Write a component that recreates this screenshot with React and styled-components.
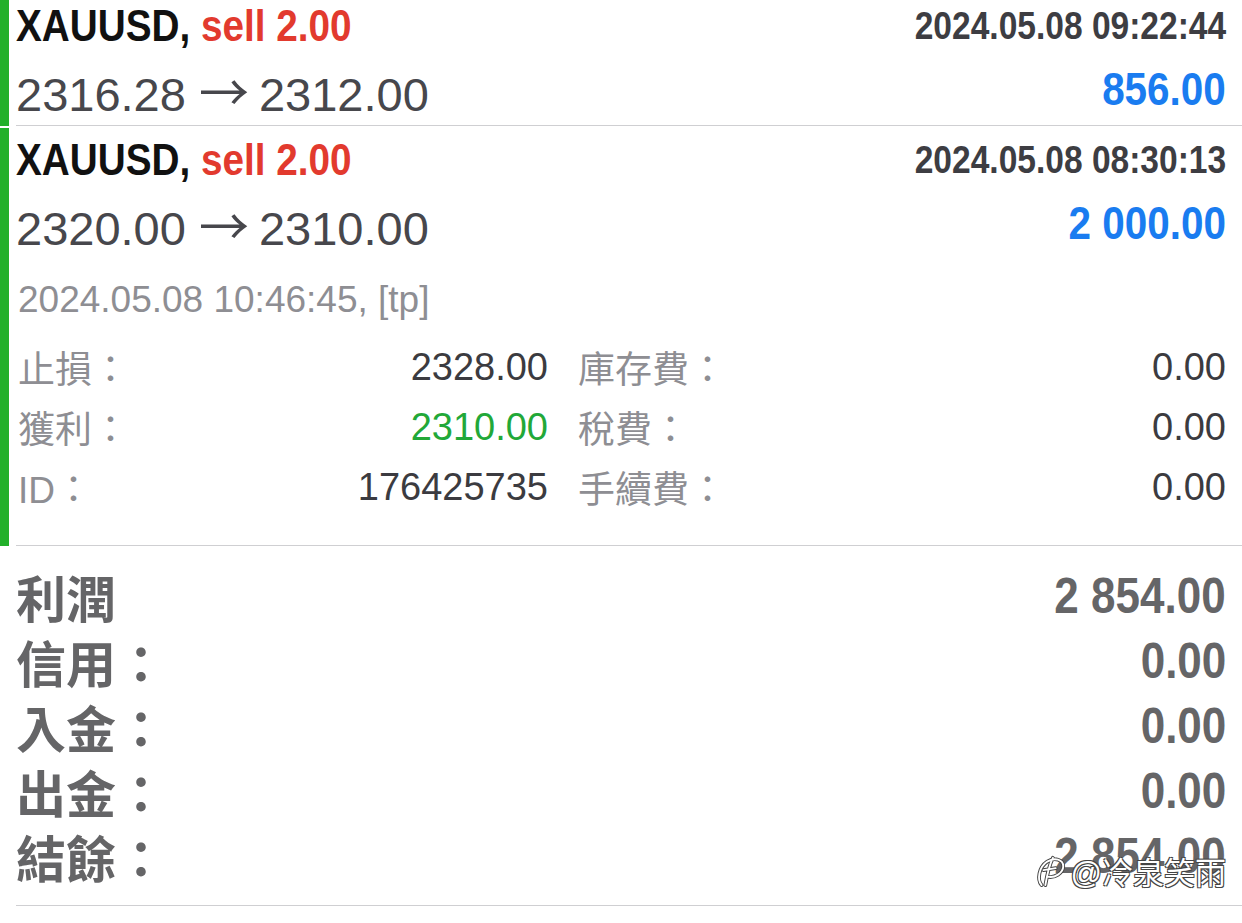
import React from "react";
import styled, { createGlobalStyle } from "styled-components";

const GlobalStyle = createGlobalStyle`
  html, body {
    margin: 0;
    padding: 0;
    background: #ffffff;
  }
  body {
    font-family: "Liberation Sans", "Noto Sans CJK TC", sans-serif;
  }
`;

const cjk = `"Liberation Sans", "Noto Sans CJK TC", sans-serif`;

// condensed bold look: Arial-metric bold squeezed horizontally
const Condensed = styled.div`
  display: inline-block;
  font-family: "Liberation Sans", sans-serif;
  font-weight: 700;
  white-space: nowrap;
  transform: scaleX(${(p) => p.$scale || 0.86});
  transform-origin: ${(p) => (p.$right ? "right" : "left")} center;
`;

const Page = styled.div`
  width: 1242px;
  height: 923px;
  overflow: hidden;
  background: #fff;
  position: relative;
`;

const Trade = styled.div`
  border-left: 9px solid #22b02a;
  padding-left: 7px;
  margin-top: ${(p) => (p.$first ? "0" : "2px")};
`;

const TradeBody = styled.div`
  padding: ${(p) => (p.$first ? "0" : "6px")} 16px ${(p) => (p.$expanded ? "28px" : "0")} 0;
  border-bottom: 1px solid #cfcfd2;
`;

const Line = styled.div`
  display: flex;
  justify-content: space-between;
  align-items: center;
  height: ${(p) => p.$h}px;
`;

const Symbol = styled(Condensed)`
  font-size: 45px;
  color: #111;
`;

const Side = styled.span`
  color: #e23a2e;
`;

const Time = styled(Condensed)`
  font-size: 39px;
  color: #3d3d42;
`;

const Prices = styled.div`
  font-family: ${cjk};
  font-size: 47px;
  color: #47474c;
  white-space: nowrap;
`;

const Arrow = styled.span`
  font-family: "Noto Sans CJK TC", sans-serif;
  font-size: 50px;
  margin: 0 10px 0 13px;
`;

const Profit = styled(Condensed)`
  font-size: 47px;
  color: #1a7cf0;
`;

const CloseInfo = styled.div`
  margin-top: 17px;
  height: 48px;
  line-height: 48px;
  padding-left: 2px;
  font-size: 37px;
  color: #8e8e93;
`;

const Details = styled.div`
  margin-top: 13px;
  padding-left: 2px;
  display: grid;
  grid-template-columns: 530px 1fr;
  column-gap: 30px;
`;

const Field = styled.div`
  display: flex;
  justify-content: space-between;
  align-items: center;
  height: 60px;
  font-size: 38px;
`;

const FieldLabel = styled.span`
  font-family: ${cjk};
  font-size: 37px;
  color: #8e8e93;
`;

const FieldValue = styled.span`
  color: ${(p) => p.$color || "#3b3b40"};
`;

const Summary = styled.div`
  margin-left: 16px;
  padding: 17px 16px 17px 0;
  border-bottom: 1px solid #cfcfd2;
`;

const SumRow = styled.div`
  display: flex;
  justify-content: space-between;
  align-items: center;
  height: 65px;
  color: #656567;
`;

const SumLabel = styled.span`
  font-family: ${cjk};
  font-weight: 700;
  font-size: 50px;
`;

const SumValue = styled(Condensed)`
  font-size: 50px;
`;

const Watermark = styled.div`
  position: absolute;
  right: 16px;
  top: 848px;
  display: flex;
  align-items: center;
  gap: 4px;
  font-family: ${cjk};
  font-size: 31px;
  color: #fff;
  text-shadow: -1px -1px 0 #444, 1px -1px 0 #444, -1px 1px 0 #444, 1px 1px 0 #444;
`;

const details = [
  ["止損：", "2328.00", null, "庫存費：", "0.00"],
  ["獲利：", "2310.00", "#22a838", "稅費：", "0.00"],
  ["ID：", "176425735", null, "手續費：", "0.00"],
];

const summary = [
  ["利潤", "2 854.00"],
  ["信用：", "0.00"],
  ["入金：", "0.00"],
  ["出金：", "0.00"],
  ["結餘：", "2 854.00"],
];

const logoPath =
  "M7 34 C2 28 4 15 13 9 C21 4 30 7 30 14 C30 21 21 27 13 25 M19 5 C15 13 13 22 11 34 M9 18 L22 16";

function TradeHead({ time, from, to, profit }) {
  return (
    <>
      <Line $h={52}>
        <Symbol>
          XAUUSD, <Side>sell 2.00</Side>
        </Symbol>
        <Time $right>{time}</Time>
      </Line>
      <Line $h={73}>
        <Prices>
          {from}
          <Arrow>→</Arrow>
          {to}
        </Prices>
        <Profit $right>{profit}</Profit>
      </Line>
    </>
  );
}

export default function App() {
  return (
    <Page>
      <GlobalStyle />
      <Trade $first>
        <TradeBody $first>
          <TradeHead time="2024.05.08 09:22:44" from="2316.28" to="2312.00" profit="856.00" />
        </TradeBody>
      </Trade>
      <Trade>
        <TradeBody $expanded>
          <TradeHead time="2024.05.08 08:30:13" from="2320.00" to="2310.00" profit="2 000.00" />
          <CloseInfo>2024.05.08 10:46:45, [tp]</CloseInfo>
          <Details>
            {details.map(([l1, v1, c1, l2, v2]) => (
              <React.Fragment key={l1}>
                <Field>
                  <FieldLabel>{l1}</FieldLabel>
                  <FieldValue $color={c1}>{v1}</FieldValue>
                </Field>
                <Field>
                  <FieldLabel>{l2}</FieldLabel>
                  <FieldValue>{v2}</FieldValue>
                </Field>
              </React.Fragment>
            ))}
          </Details>
        </TradeBody>
      </Trade>
      <Summary>
        {summary.map(([label, value]) => (
          <SumRow key={label}>
            <SumLabel>{label}</SumLabel>
            <SumValue $right $scale={0.88}>{value}</SumValue>
          </SumRow>
        ))}
      </Summary>
      <Watermark>
        <svg width="32" height="38" viewBox="0 0 34 38">
          <path d={logoPath} fill="none" stroke="#444" strokeWidth="4" strokeLinecap="round" />
          <path d={logoPath} fill="none" stroke="#fff" strokeWidth="2" strokeLinecap="round" />
        </svg>
        <span>@冷泉笑雨</span>
      </Watermark>
    </Page>
  );
}
